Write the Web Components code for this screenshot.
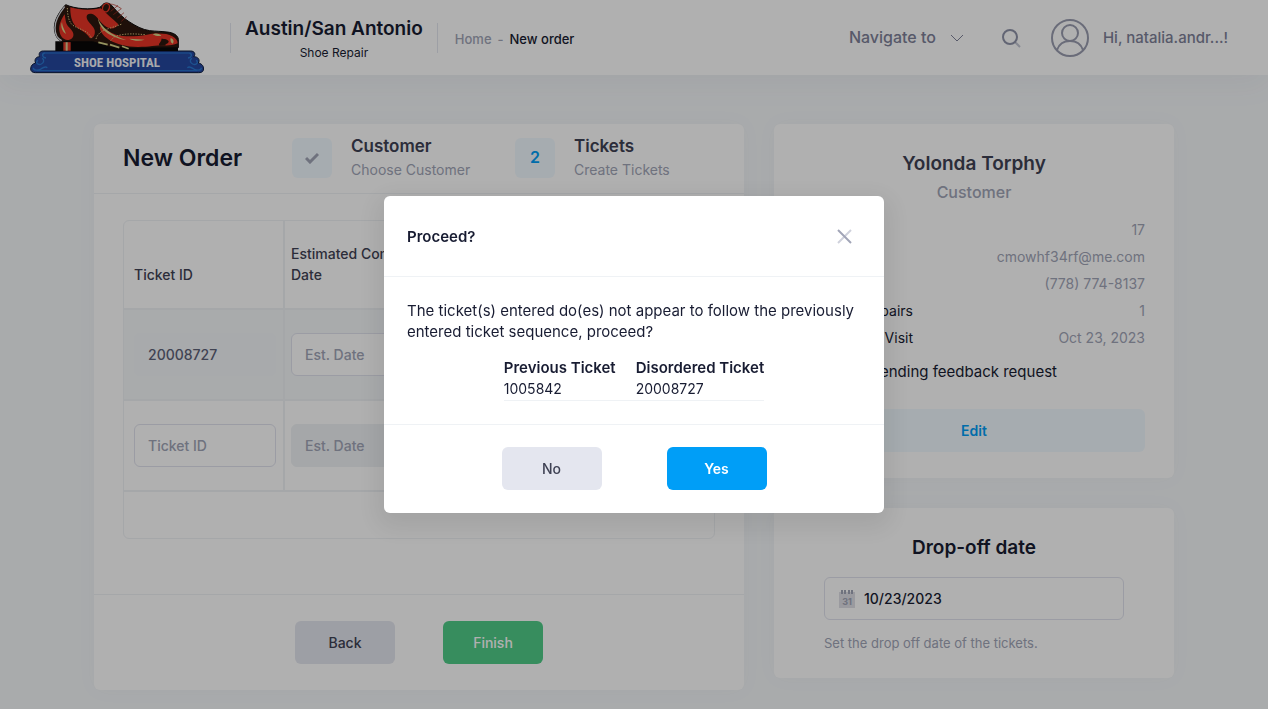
<!DOCTYPE html>
<html lang="en">
<head>
<meta charset="utf-8">
<meta name="viewport" content="width=device-width, initial-scale=1">
<title>New order - Shoe Hospital</title>
<style>
  :root {
    --ink: #181c32;
    --text: #3f4254;
    --soft: #7e8299;
    --muted: #a1a5b7;
    --line: #eff2f5;
    --field-line: #e1e3ee;
    --page: #f5f8fa;
    --primary: #009ef7;
    --primary-light: #f1faff;
    --secondary: #e4e6ef;
    --success: #50cd89;
    --radius: 6px;
  }
  body {
    margin: 0;
    background: var(--page);
    color: var(--ink);
    font: 400 14px/21px Inter, "Open Sans", sans-serif;
  }
</style>
</head>
<body>
<order-page></order-page>

<script>
const define = (name, html) => {
  const tpl = document.createElement('template');
  tpl.innerHTML = '<style>*{box-sizing:border-box}</style>' + html;
  customElements.define(name, class extends HTMLElement {
    constructor() {
      super();
      this.attachShadow({ mode: 'open' }).append(tpl.content.cloneNode(true));
    }
  });
};

define('brand-logo', `
<style>
  :host { display: block; }
  svg { display: block; width: 174px; height: 72px; }
  text { font-family: "Liberation Sans Narrow", "Roboto Condensed", "Liberation Sans", sans-serif; font-weight: 700; }
</style>
<svg viewBox="30 6 522 216" role="img" aria-label="Shoe Hospital">
  <path d="M70 153H512c12 0 16 10 9 17 14 0 20 10 14 19 12 2 18 12 15 22-2 6-8 7-14 7H46c-8 0-14-4-14-11 0-10 6-16 15-18-5-9 0-19 12-19-4-9 0-17 11-17z" fill="#2547a0" stroke="#0c1c3c" stroke-width="3"/>
  <path d="M72 159H508M50 212H532" stroke="#2a78d0" stroke-width="3"/>
  <path d="M74 159c-10 3-7 14 4 15M54 181c-9 5-2 16 10 11 8-4 10-14 2-17M40 203c0 10 16 9 24 3 7-5 12-8 18-3M508 159c10 3 7 14-4 15M528 181c9 5 2 16-10 11-8-4-10-14-2-17M544 203c0 10-16 9-24 3-7-5-12-8-18-3" fill="none" stroke="#2a78d0" stroke-width="4"/>
  <path d="M106 124H214l16-2 80 14 30 6H474v11H106z" fill="#0a0808"/>
  <path d="M130 126h22v26h-22z" fill="#e03a2a"/><path d="M137 126h6v26h-6z" fill="#d8cf96"/>
  <path d="M137 14c-16 17-34 44-34 68 0 23 10 38 24 43h91l52 17 71 3 134-2V118c-1-12-14-20-34-22-16-2-32-2-52-4-22-3-42-14-62-27-19-12-34-28-48-44-10-15-27-16-34-3l-6 4c-26 8-74 5-102-8z" fill="#2c170e" stroke="#0a0808" stroke-width="3"/>
  <path d="M134 20c-16 20-30 42-29 64 0 18 7 32 20 38" fill="none" stroke="#dadde2" stroke-width="4"/>
  <path d="M134 43c-10 14-18 32-16 48 2 18 11 28 24 29 12 0 20-8 18-19-2-12-16-18-21-31-3-9-3-17-5-27z" fill="#ea3526"/>
  <path d="M126 66c-6 14 2 30 12 36-4-13-11-20-12-36z" fill="#d8d68a"/>
  <path d="M151 22c28 9 65 9 91 3 16 15 37 32 53 48-5 12-22 16-34 9-22-14-30-36-44-40-18-5-22 9-11 23 9 12 22 20 18 37-2 9-8 13-14 13-10-18-30-24-43-36-12-12-17-36-16-57z" fill="#ea3526"/>
  <path d="M240 78c14 8 28 20 48 26 30 8 62 5 93 0 19-4 59-6 76 5 10 6 16 13 16 21-14 6-30 7-43 6-20 0-44 5-76 5-36-1-63-8-87-22-19-12-29-27-27-41z" fill="#ea3526"/>
  <path d="M424 116c10 0 20 2 22 8 1 5-8 8-11 12l-16 1c-8-6 8-12 5-21z" fill="#2c170e"/>
  <path d="M234 55c10 28 40 50 86 66-42-7-82-28-86-66zM328 116c14 7 31 8 46 3-13-2-29-1-46-3zM398 103c10-6 24 0 26 5-10 1-18 0-26-5zM452 114c9 3 11 11 6 17-6-3-8-10-6-17z" fill="#d8d68a"/>
  <path d="M142 24c1 20 3 42 17 52 19 13 46 14 57 41M228 117c9-30 40-29 80-46M272 122c12-18 43-24 103-18" fill="none" stroke="#d9c47c" stroke-width="3" stroke-dasharray="4 4"/>
  <path d="M235 127l28 7M270 134l28 9M306 139l20 7" stroke="#d8d68a" stroke-width="5"/>
  <ellipse cx="258" cy="23" rx="10" ry="13" transform="rotate(20 258 23)" fill="none" stroke="#ea3526" stroke-width="4"/>
  <path d="M268 12c14 0 24 6 36 14M272 34l22-18M280 44l24-18M292 54l20-16M304 64l16-14" fill="none" stroke="#b52c20" stroke-width="2"/>
  <text x="291" y="200" text-anchor="middle" font-size="39" fill="#f4f5f8">SHOE HOSPITAL</text>
</svg>`);

define('app-header', `
<style>
  :host { display: block; background: #fff; box-shadow: 0 10px 30px rgba(82, 63, 105, .05); }
  header { display: flex; align-items: center; height: 75px; padding: 0 40px 0 30px; }
  .rule { width: 1px; height: 30px; background: var(--secondary); }
  .shop { margin: 3px 14px 0; text-align: center; }
  .shop strong { display: block; font-size: 19px; line-height: 27px; font-weight: 600; }
  .shop span { display: block; font-size: 12px; line-height: 21px; }
  brand-logo { margin-right: 26px; }
  nav { display: flex; gap: 6px; margin: 4px auto 0 17px; font-size: 13px; font-weight: 500; color: var(--muted); }
  nav a { color: inherit; text-decoration: none; }
  nav [aria-current] { color: var(--ink); }
  button { display: flex; align-items: center; padding: 0; border: 0; background: none; font: inherit; color: var(--soft); font-weight: 500; }
  svg { display: block; fill: none; }
  .menu { gap: 14px; margin-right: 37px; font-size: 16px; }
  .search { margin-right: 30px; }
  .user { gap: 14px; font-size: 15px; }
</style>
<header>
  <brand-logo></brand-logo>
  <div class="rule"></div>
  <div class="shop"><strong>Austin/San Antonio</strong><span>Shoe Repair</span></div>
  <div class="rule"></div>
  <nav aria-label="Breadcrumb"><a href="#home">Home</a><span>-</span><a href="#new" aria-current="page">New order</a></nav>
  <button class="menu" type="button">Navigate to
    <svg width="14" height="8" viewBox="0 0 14 8" stroke="#7e8299"><path d="M1 1l6 6 6-6"/></svg>
  </button>
  <button class="search" type="button" aria-label="Search">
    <svg width="20" height="20" viewBox="0 0 20 20" stroke-width="2"><path d="M14 14l5 5" stroke="#c3c6d3"/><circle cx="9" cy="9" r="7" stroke="#8f93a8"/></svg>
  </button>
  <button class="user" type="button">
    <svg width="38" height="38" viewBox="0 0 38 38" stroke="#9a9db0" stroke-width="2"><circle cx="19" cy="19" r="18"/><circle cx="19" cy="14" r="8"/><path d="M6 31c2-6 7-9 13-9s11 3 13 9"/></svg>
    Hi, natalia.andr...!
  </button>
</header>`);

define('ui-button', `
<style>
  :host { display: block; width: 100px; }
  button { display: block; width: 100%; height: 43px; padding: 0; border: 0; border-radius: var(--radius); background: var(--secondary); color: var(--text); font: inherit; font-weight: 500; }
  :host([kind=primary]) button { background: var(--primary); color: #fff; font-weight: 600; }
  :host([kind=success]) button { background: var(--success); color: #fff; }
  :host([kind=light]) { width: auto; }
  :host([kind=light]) button { background: var(--primary-light); color: var(--primary); font-weight: 600; }
</style>
<button type="button"><slot></slot></button>`);

define('ui-card', `
<style>
  :host { display: block; background: #fff; border-radius: var(--radius); box-shadow: 0 0 20px rgba(76, 87, 125, .04); }
</style>
<slot></slot>`);

define('step-item', `
<style>
  :host { display: flex; align-items: center; gap: 19px; }
  .mark { display: grid; place-items: center; width: 40px; height: 40px; border-radius: var(--radius); background: var(--primary-light); color: var(--primary); font-size: 16px; font-weight: 600; }
  .title { font-size: 17px; line-height: 24px; font-weight: 600; color: var(--text); }
  .note { font-size: 14px; line-height: 24px; color: var(--muted); }
</style>
<div class="mark"><slot name="mark"></slot></div>
<div><div class="title"><slot name="title"></slot></div><div class="note"><slot></slot></div></div>`);

define('ticket-table', `
<style>
  :host { display: block; border: 1px solid var(--line); border-radius: var(--radius); }
  table { width: 100%; border-collapse: separate; border-spacing: 0; table-layout: fixed; }
  col.id { width: 161px; } col.date { width: 190px; }
  th, td { padding: 0 7px 0 6px; border-bottom: 2px solid var(--line); border-right: 2px solid var(--line); text-align: left; }
  th { height: 89px; padding-bottom: 23px; vertical-align: bottom; font-weight: 500; color: var(--text); }
  td { height: 91px; }
  th:first-child, td:first-child { padding-left: 10px; }
  th:last-child, td:last-child { border-right: 0; }
  tfoot td { height: 46px; border: 0; }
  .saved td { background: var(--page); }
  input { display: block; width: 100%; height: 43px; padding: 0 13px; border: 1px solid var(--field-line); border-radius: var(--radius); background: #fff; font: inherit; font-weight: 500; color: #5e6278; }
  input::placeholder { color: var(--muted); opacity: 1; }
  input:disabled { background: var(--line); border-color: var(--line); }
  .saved input[readonly] { background: #f3f6f9; border-color: #f3f6f9; }
</style>
<table>
  <colgroup><col class="id"><col class="date"><col></colgroup>
  <thead><tr><th>Ticket ID</th><th>Estimated Completion Date</th><th>Quantity</th></tr></thead>
  <tbody>
    <tr class="saved"><td><input aria-label="Ticket ID" value="20008727" readonly></td><td><input aria-label="Estimated date" placeholder="Est. Date"></td><td></td></tr>
    <tr><td><input aria-label="New ticket ID" placeholder="Ticket ID"></td><td><input aria-label="New estimated date" placeholder="Est. Date" disabled></td><td></td></tr>
  </tbody>
  <tfoot><tr><td colspan="3"></td></tr></tfoot>
</table>`);

define('order-card', `
<style>
  :host { display: block; }
  header { display: flex; align-items: center; height: 70px; padding: 0 29px; border-bottom: 1px solid var(--line); }
  h1 { flex: 0 0 169px; margin: 0; font-size: 23px; line-height: 33px; font-weight: 600; }
  step-item { flex: 0 0 223px; margin-bottom: 2px; }
  .body { padding: 26px 29px 55px; }
  footer { display: flex; justify-content: center; gap: 48px; padding: 26px 29px; border-top: 1px solid var(--line); }
</style>
<ui-card>
  <header>
    <h1>New Order</h1>
    <step-item>
      <svg slot="mark" width="14" height="12" viewBox="0 0 14 12" fill="none" stroke="#a1a5b7" stroke-width="3"><path d="M1 6l4 4 8-8"/></svg>
      <span slot="title">Customer</span>Choose Customer
    </step-item>
    <step-item><span slot="mark">2</span><span slot="title">Tickets</span>Create Tickets</step-item>
  </header>
  <div class="body"><ticket-table></ticket-table></div>
  <footer><ui-button>Back</ui-button><ui-button kind="success">Finish</ui-button></footer>
</ui-card>`);

define('info-row', `
<style>
  :host { display: flex; justify-content: space-between; line-height: 27px; }
  .label { width: 110px; text-align: left; }
  :host([align=end]) .label { text-align: right; }
  .value { color: var(--muted); }
</style>
<span class="label"><slot name="label"></slot></span><span class="value"><slot></slot></span>`);

define('customer-card', `
<style>
  :host { display: block; text-align: center; }
  ui-card { padding: 26px 29px; }
  h2 { margin: 0; font-size: 19px; line-height: 28px; font-weight: 600; color: var(--text); }
  .role { margin-bottom: 10px; font-size: 16px; line-height: 28px; font-weight: 500; color: var(--muted); }
  label { display: flex; align-items: center; justify-content: space-between; width: 254px; margin: 10px 0 27px; font-size: 15px; }
  input { width: 16px; height: 16px; margin: 0; }
</style>
<ui-card>
  <h2>Yolonda Torphy</h2>
  <div class="role">Customer</div>
  <info-row><span slot="label">ID</span>17</info-row>
  <info-row><span slot="label">Email</span>cmowhf34rf@me.com</info-row>
  <info-row><span slot="label">Phone</span>(778) 774-8137</info-row>
  <info-row align="end"><span slot="label">Repairs</span>1</info-row>
  <info-row align="end"><span slot="label">Last Visit</span>Oct 23, 2023</info-row>
  <label><input type="checkbox">Has pending feedback request</label>
  <ui-button kind="light">Edit</ui-button>
</ui-card>`);

define('dropoff-card', `
<style>
  :host { display: block; }
  ui-card { padding: 26px 50px 24px; }
  .title { display: block; margin-bottom: 15px; text-align: center; font-size: 19px; line-height: 28px; font-weight: 600; }
  .field { display: flex; align-items: center; gap: 9px; height: 43px; padding: 0 14px; border: 1px solid var(--field-line); border-radius: var(--radius); }
  svg { display: block; flex: none; }
  svg text { font: 700 9px Inter, sans-serif; }
  input { flex: 1; min-width: 0; padding: 0; border: 0; outline: 0; background: none; font: inherit; font-weight: 500; color: var(--ink); }
  p { margin: 12px 0 0; font-size: 13px; line-height: 22px; color: var(--muted); }
</style>
<ui-card>
  <label class="title" for="date">Drop-off date</label>
  <div class="field">
    <svg width="16" height="18" viewBox="0 0 16 18"><path d="M0 2h16v16H0z" fill="#dfe0e6"/><path d="M3 0v4M6 0v4M10 0v4M13 0v4" stroke="#a1a5b7" stroke-width="2"/><text x="8" y="15" text-anchor="middle" fill="#a1a5b7">31</text></svg>
    <input id="date" value="10/23/2023">
  </div>
  <p>Set the drop off date of the tickets.</p>
</ui-card>`);

define('confirm-modal', `
<style>
  :host { position: fixed; inset: 0; display: grid; place-items: center; background: rgba(0, 0, 0, .31); }
  section { width: 500px; max-width: 100%; background: #fff; border-radius: var(--radius); box-shadow: 0 8px 24px 8px rgba(0, 0, 0, .08); }
  header { display: flex; align-items: center; justify-content: space-between; height: 81px; padding: 0 32px 0 23px; border-bottom: 1px solid var(--line); }
  h2 { margin: 0; font-size: 15px; line-height: 21px; font-weight: 600; }
  .close { padding: 0; border: 0; background: none; }
  svg { display: block; }
  .body { padding: 23px; border-bottom: 1px solid var(--line); }
  p { margin: 0 0 15px; font-size: 15px; }
  table { margin: 0 auto; border-collapse: collapse; }
  tr:last-child { border-bottom: 1px solid var(--line); }
  th, td { padding: 0 0 0 20px; text-align: left; line-height: 21px; }
  th:first-child, td:first-child { padding-left: 0; }
  th { font-size: 15px; font-weight: 600; }
  td { padding-bottom: 1px; }
  footer { display: flex; justify-content: center; gap: 65px; padding: 22px 23px 23px; }
</style>
<section role="dialog" aria-modal="true" aria-labelledby="t">
  <header>
    <h2 id="t">Proceed?</h2>
    <button class="close" type="button" aria-label="Close">
      <svg width="15" height="15" viewBox="0 0 15 15" fill="none" stroke-width="2"><path d="M14 1L1 14" stroke="#cfd1dc"/><path d="M1 1l13 13" stroke="#a1a5b7"/></svg>
    </button>
  </header>
  <div class="body">
    <p>The ticket(s) entered do(es) not appear to follow the previously entered ticket sequence, proceed?</p>
    <table>
      <tr><th>Previous Ticket</th><th>Disordered Ticket</th></tr>
      <tr><td>1005842</td><td>20008727</td></tr>
    </table>
  </div>
  <footer><ui-button>No</ui-button><ui-button kind="primary">Yes</ui-button></footer>
</section>`);

define('order-page', `
<style>
  :host { display: block; }
  main { display: grid; grid-template-columns: minmax(0, 650fr) minmax(0, 400fr); gap: 30px; align-items: start; max-width: 1080px; margin: 0 auto; padding: 49px 0 19px; }
  aside { display: grid; gap: 30px; }
</style>
<app-header></app-header>
<main>
  <order-card></order-card>
  <aside><customer-card></customer-card><dropoff-card></dropoff-card></aside>
</main>
<confirm-modal></confirm-modal>`);
</script>
</body>
</html>
